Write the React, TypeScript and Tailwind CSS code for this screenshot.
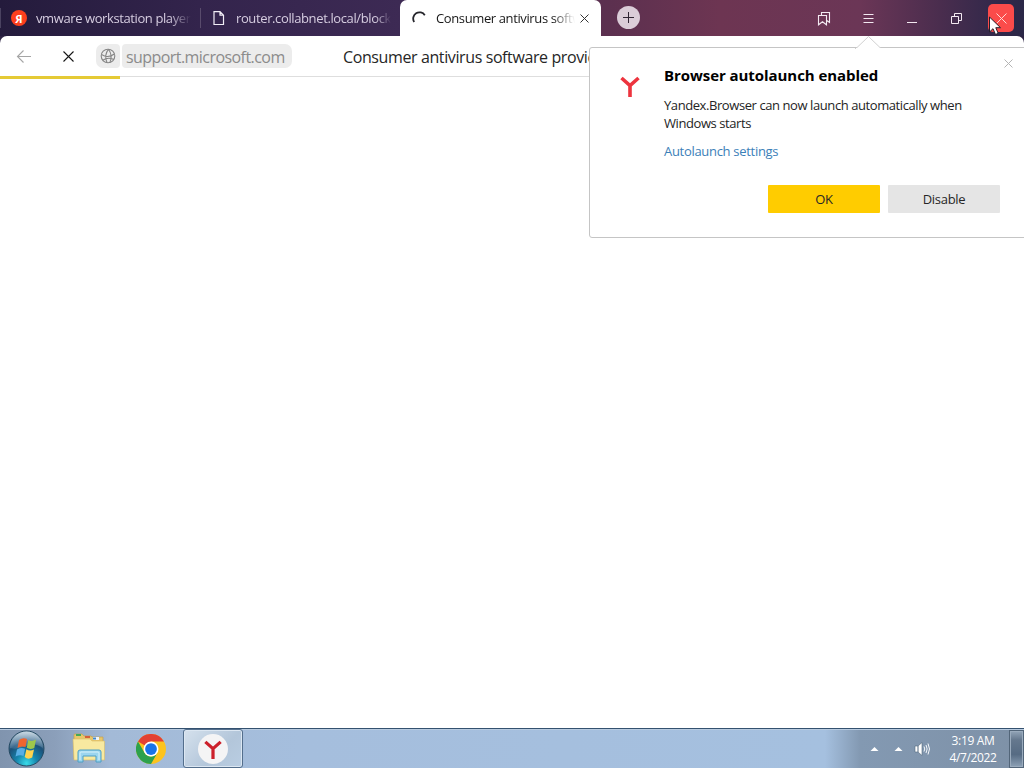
import type { ReactNode } from "react";

const YandexLetter = ({ className }: { className: string }) => (
  <svg viewBox="0 0 20 22" className={className} fill="none" stroke="currentColor">
    <path d="M1.5 2 L10 9.5 L18.5 2 M10 9 V21" strokeWidth="3.6" />
  </svg>
);

const WindowButton = ({ children }: { children: ReactNode }) => (
  <button className="flex h-9 w-11 items-center justify-center text-[#f3e9f1]">{children}</button>
);

function TabStrip() {
  return (
    <div className="flex h-9 bg-[linear-gradient(90deg,#241b3c_0px,#33244c_200px,#3d2a54_400px,#5c304f_610px,#6d3552_720px,#6b3656_860px,#4a2d4e_940px,#30284a_1000px,#2b2747_1024px)]">
      <div className="flex w-[200px] items-center">
        <span className="h-5 w-px bg-[#4a4260]" />
        <span className="ml-[10px] flex h-4 w-4 shrink-0 items-center justify-center rounded-full bg-[#fc3f1d] text-[11px] font-bold leading-none text-white">
          Я
        </span>
        <span className="ml-[9px] mt-[2px] w-[155px] overflow-hidden whitespace-nowrap text-[13px] font-medium tracking-[-0.4px] text-[#d6cde0] [mask-image:linear-gradient(90deg,#000_86%,transparent)]">
          vmware workstation player
        </span>
      </div>
      <div className="flex w-[200px] items-center">
        <span className="h-5 w-px bg-[#594b6c]" />
        <svg className="ml-[12px] h-4 w-3 shrink-0" viewBox="0 0 12 16" fill="none" stroke="#f1edf5" strokeWidth="1.2">
          <path d="M1 1.6 H7 L10.5 5.2 V14.5 H1 Z M7 1.6 V5.2 H10.5" />
        </svg>
        <span className="ml-[11px] mt-[2px] w-[155px] overflow-hidden whitespace-nowrap text-[13px] font-medium tracking-[-0.38px] text-[#d6cde0] [mask-image:linear-gradient(90deg,#000_90%,transparent)]">
          router.collabnet.local/block
        </span>
      </div>
      <div className="flex w-[201px] items-center rounded-t-[7px] bg-white pl-3">
        <svg className="h-4 w-4 shrink-0" viewBox="0 0 16 16" fill="none" stroke="#25252b" strokeWidth="1.8">
          <path d="M2.2 12 A6 6 0 0 1 12.8 5.2" />
        </svg>
        <span className="ml-2 mt-[2px] w-[139px] overflow-hidden whitespace-nowrap text-[13px] tracking-[-0.38px] text-[#171717] [mask-image:linear-gradient(90deg,#000_84%,transparent)]">
          Consumer antivirus software
        </span>
        <svg className="ml-[5px] h-[9px] w-[9px] shrink-0" viewBox="0 0 9 9" stroke="#333">
          <path d="M0.5 0.5 L8.5 8.5 M8.5 0.5 L0.5 8.5" />
        </svg>
      </div>
      <button className="ml-4 mt-[6px] flex h-[23px] w-[23px] items-center justify-center rounded-full bg-[#dbcdd8]">
        <svg className="h-[13px] w-[13px]" viewBox="0 0 13 13" stroke="#302533">
          <path d="M6.5 1 V12 M1 6.5 H12" />
        </svg>
      </button>
      <div className="ml-auto flex pr-[2px]">
        <WindowButton>
          <svg className="h-[15px] w-[15px]" viewBox="0 0 15 15" fill="none" stroke="currentColor" strokeWidth="1.1">
            <path d="M1.5 4.5 H9.5 V13.8 L5.5 10.8 L1.5 13.8 Z M4.5 4.5 V1.5 H12.5 V11.5 L9.8 9.5" />
          </svg>
        </WindowButton>
        <WindowButton>
          <svg className="h-[11px] w-[11px]" viewBox="0 0 11 11" stroke="currentColor">
            <path d="M0.5 1.5 H10.5 M0.5 5.5 H10.5 M0.5 9.5 H10.5" />
          </svg>
        </WindowButton>
        <WindowButton>
          <span className="mt-[9px] h-px w-[10px] bg-[#f3e9f1]" />
        </WindowButton>
        <WindowButton>
          <svg className="h-[11px] w-[11px]" viewBox="0 0 11 11" fill="none" stroke="currentColor">
            <path d="M0.5 3.5 H7.5 V10.5 H0.5 Z M3.5 3.5 V0.5 H10.5 V7.5 H7.5" />
          </svg>
        </WindowButton>
        <button className="ml-[10px] mr-2 mt-1 flex h-7 w-[26px] items-center justify-center rounded-[5px] bg-[#fb4b4a]">
          <svg className="h-[11px] w-[11px]" viewBox="0 0 11 11" stroke="#ffd9d6">
            <path d="M0.5 0.5 L10.5 10.5 M10.5 0.5 L0.5 10.5" />
          </svg>
        </button>
      </div>
    </div>
  );
}

function AddressBar() {
  return (
    <div className="bg-[#2e2444]">
      <div className="flex h-10 items-center rounded-t-[7px] bg-white pl-4 text-base">
        <svg className="h-4 w-4" viewBox="0 0 16 16" fill="none" stroke="#a5a5a5" strokeWidth="1.1">
          <path d="M15 8.5 H1.5 M7.5 2.5 L1.5 8.5 L7.5 14.5" />
        </svg>
        <svg className="ml-[31px] h-[11px] w-[11px]" viewBox="0 0 11 11" stroke="#161616" strokeWidth="1.1">
          <path d="M0.5 0.5 L10.5 10.5 M10.5 0.5 L0.5 10.5" />
        </svg>
        <span className="ml-[22px] flex h-6 w-6 items-center justify-center rounded-l-[7px] rounded-r bg-[#ececec]">
          <svg className="h-4 w-4" viewBox="0 0 16 16" fill="none" stroke="#858585" strokeWidth="1.1">
            <circle cx="8" cy="8" r="6.8" />
            <path d="M1.5 6.5 Q8 10.8 14.3 6 M2.8 12.3 Q8 8.5 13.8 11.6 M8.6 1.2 Q3.8 7 7 14.7 M8.6 1.2 Q12.8 7.5 10 14.4" />
          </svg>
        </span>
        <span className="ml-[2px] flex h-6 w-[170px] items-center whitespace-nowrap rounded-l rounded-r-[7px] bg-[#ececec] pl-1 pt-px tracking-[-0.56px] text-[#8b8b8b]">
          support.microsoft.com
        </span>
        <span className="ml-[51px] whitespace-nowrap pt-px tracking-[-0.39px] text-[#262626]">
          Consumer antivirus software providers
        </span>
      </div>
      <div className="h-[3px] border-t border-[#dedede] bg-white">
        <div className="-mt-px h-[3px] w-[120px] bg-[#e5ca35]" />
      </div>
    </div>
  );
}

function AutolaunchPopup() {
  return (
    <div className="absolute left-[589px] top-[47px] h-[191px] w-[445px] rounded-[3px] border border-[#c5c5c5] bg-white">
      <svg className="absolute -top-[12px] left-[265px] h-[13px] w-[27px]" viewBox="0 0 27 13" fill="#fff" stroke="#d0d0d0">
        <path d="M0 12.5 H1 L13.5 0.5 L26 12.5" />
        <path d="M1 13 H26" stroke="#fff" strokeWidth="2" />
      </svg>
      <div className="flex pl-[30px] pt-4">
        <YandexLetter className="mt-3 h-[22px] w-5 text-[#ed343e]" />
        <div className="ml-6">
          <h1 className="whitespace-nowrap text-[15px] font-bold leading-[22px] tracking-[-0.06px] text-black">
            Browser autolaunch enabled
          </h1>
          <p className="mt-[10px] w-[320px] text-[13px] leading-[18px] tracking-[-0.42px] text-[#242424]">
            Yandex.Browser can now launch automatically when
            <br />
            Windows starts
          </p>
          <a className="mt-[10px] block text-[13px] leading-[18px] tracking-[-0.3px] text-[#3b80b8]">Autolaunch settings</a>
        </div>
      </div>
      <div className="mt-[25px] flex gap-2 pl-[178px] text-[13px] tracking-[-0.3px] text-[#272727]">
        <button className="h-7 w-28 rounded-[1px] bg-[#ffcc00] pt-px">OK</button>
        <button className="h-7 w-28 rounded-[1px] bg-[#e5e5e5] pt-px">Disable</button>
      </div>
      <svg className="absolute left-[414px] top-[11px] h-[9px] w-[9px]" viewBox="0 0 9 9" stroke="#b4b4b4">
        <path d="M0.5 0.5 L8.5 8.5 M8.5 0.5 L0.5 8.5" />
      </svg>
    </div>
  );
}

function StartOrb() {
  return (
    <svg className="h-[37px] w-[37px]" viewBox="0 0 37 37">
      <defs>
        <radialGradient id="orb" cx="50%" cy="92%" r="85%">
          <stop offset="0" stopColor="#38dbe8" />
          <stop offset="0.35" stopColor="#1685ad" />
          <stop offset="0.7" stopColor="#1c5078" />
          <stop offset="1" stopColor="#7692a9" />
        </radialGradient>
        <linearGradient id="shine" x1="0" y1="0" x2="0" y2="1">
          <stop offset="0" stopColor="#dce9f2" stopOpacity="0.8" />
          <stop offset="1" stopColor="#7b9ebb" stopOpacity="0.25" />
        </linearGradient>
      </defs>
      <circle cx="18.5" cy="18.5" r="17.5" fill="url(#orb)" stroke="#254a62" />
      <path d="M2 18 A16.5 16.5 0 0 1 35 18 Q27 12 18 16 Q9 20 2 18" fill="url(#shine)" />
      <path d="M11 10 Q15 7 19 9 L17.5 17 Q13 15.5 9.5 18 Z" fill="#ef652f" />
      <path d="M20.3 10 Q24 12 28 9.5 L26.3 18 Q22 20 18.8 17.8 Z" fill="#9fc74b" />
      <path d="M9 19.5 Q13 17 17.1 18.7 L15.5 26 Q12 24.5 7.5 26.5 Z" fill="#58aee5" />
      <path d="M18.4 19.3 Q22 21.7 26 19.5 L24.2 27.5 Q20 30 16.7 27 Z" fill="#ffd34f" />
    </svg>
  );
}

function ExplorerIcon() {
  return (
    <svg className="h-[31px] w-[34px]" viewBox="0 0 34 31">
      <path d="M2 5 V2 Q2 1 3 1 H10 L12 3 H19 L20 4 H31 V26 H2 Z" fill="#e8c76b" stroke="#c4a24d" strokeWidth="0.7" />
      <rect x="4" y="1" width="5" height="2" fill="#45a957" />
      <rect x="13" y="3" width="5" height="2" fill="#d5603b" />
      <rect x="21" y="4" width="6" height="3" fill="#eef4fa" />
      <rect x="21" y="4.5" width="3" height="2" fill="#4388c7" />
      <path d="M1 6 H18 L20 8 H32.5 V27 H2 Z" fill="#f8e9a0" stroke="#d9bd69" strokeWidth="0.6" />
      <path d="M6 29 V19 Q6 17 8 17 H27 Q29 17 29 19 V29 H24 V23 H11 V29 Z" fill="#9bd5ef" stroke="#4c9fc4" />
      <path d="M8 27 V20 Q8 19 9 19 H26 Q27 19 27 20 V27" fill="none" stroke="#d7f2fb" />
    </svg>
  );
}

function ChromeIcon() {
  return (
    <svg className="h-[30px] w-[30px]" viewBox="0 0 48 48">
      <circle cx="24" cy="24" r="24" fill="#fcc31e" />
      <path d="M24 24 L3.2 12 A24 24 0 0 1 44.8 12 H24 Z" fill="#e34133" />
      <path d="M3.2 12 A24 24 0 0 0 24 48 L34.4 30 A12 12 0 0 1 13.6 30 Z" fill="#2da14d" />
      <circle cx="24" cy="24" r="12" fill="#fff" />
      <circle cx="24" cy="24" r="9.4" fill="#1a73e8" />
    </svg>
  );
}

const TrayArrow = () => (
  <svg className="h-[6px] w-[9px]" viewBox="0 0 9 6">
    <path d="M0.5 5 L4.5 1 L8.5 5 Z" fill="#fff" />
  </svg>
);

function Taskbar() {
  return (
    <div className="flex h-10 items-center border-t border-[#34516f] bg-[linear-gradient(90deg,#8094ae_0px,#8b9fba_55px,#a3bad7_110px,#a5bedd_300px,#a5c0df_825px,#8399b2_860px,#7e91a7_1024px)] shadow-[inset_0_1px_0_#b8cbe0]">
      <div className="flex w-[183px] items-center pl-2">
        <StartOrb />
        <span className="ml-[27px]"><ExplorerIcon /></span>
        <span className="ml-[30px]"><ChromeIcon /></span>
      </div>
      <div className="flex h-[39px] w-[60px] items-center justify-center rounded-[3px] border border-[#536e8c] bg-[linear-gradient(135deg,#d5e1ed,#b3c6da_60%,#b9cde2)] shadow-[inset_0_0_0_1px_#dce7f2]">
        <span className="flex h-[30px] w-[30px] items-center justify-center rounded-full bg-[#f4f4f5]">
          <YandexLetter className="mt-[3px] h-5 w-[18px] text-[#cc202b]" />
        </span>
      </div>
      <div className="ml-auto flex h-full items-center">
        <TrayArrow />
        <span className="ml-[15px] flex"><TrayArrow /></span>
        <svg className="ml-[11px] h-4 w-[17px]" viewBox="0 0 17 16" fill="none" stroke="#f5f8fb">
          <path d="M1 5 H4 L8 1.5 V14.5 L4 11 H1 Z" fill="#fff" stroke="#53687e" strokeWidth="0.6" />
          <path d="M4 5 V11" stroke="#53687e" />
          <path d="M10 5.5 Q11.5 8 10 10.5 M12 4 Q14.3 8 12 12 M14 2.5 Q17 8 14 13.5" />
        </svg>
        <div className="ml-[15px] w-[54px] text-center text-[12px] leading-[17px] tracking-[-0.35px] text-white">
          <div>3:19 AM</div>
          <div className="whitespace-nowrap">4/7/2022</div>
        </div>
        <div className="ml-[9px] h-[38px] w-[15px] border border-[#526579] bg-[linear-gradient(180deg,#93a5b8,#65788e_25%,#566b83_65%,#8da1b6)] shadow-[inset_0_0_0_1px_#9aabbd]" />
      </div>
    </div>
  );
}

export default function App() {
  return (
    <main className="relative flex h-screen w-screen flex-col overflow-hidden bg-white font-['Open_Sans','Noto_Sans',sans-serif]">
      <TabStrip />
      <AddressBar />
      <section className="flex-1 bg-white" />
      <Taskbar />
      <AutolaunchPopup />
      <svg className="absolute left-[988px] top-[16px] h-[20px] w-[14px]" viewBox="0 0 14 20">
        <path d="M1.5 1 V16 L5 12.7 L7.5 18.5 L10.2 17.3 L7.8 11.7 H12.5 Z" fill="#fff" stroke="#251f2b" />
      </svg>
    </main>
  );
}
